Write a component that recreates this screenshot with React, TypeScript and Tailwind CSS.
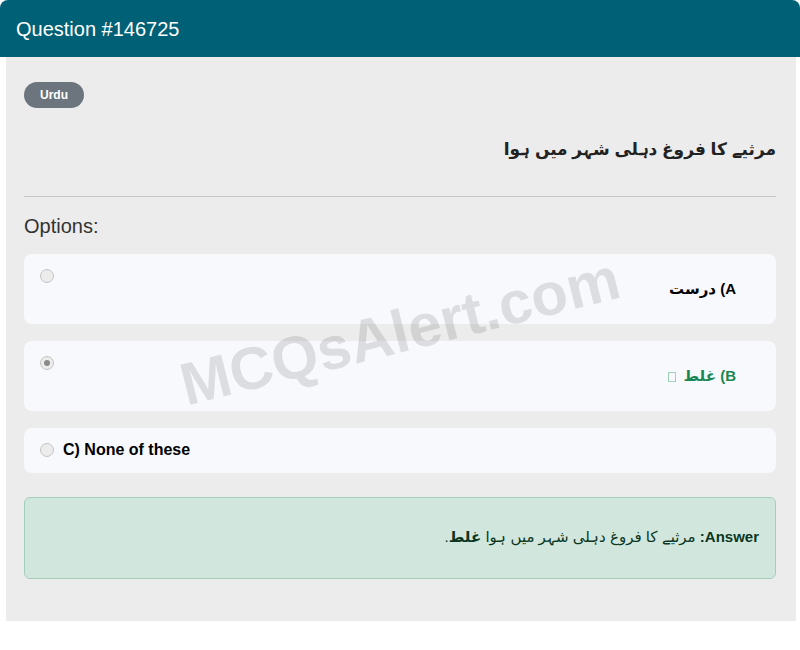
import React from "react";

const font = { fontFamily: '"Liberation Sans", "DejaVu Sans", Arial, sans-serif' };

function Radio({ checked }: { checked?: boolean }) {
  return (
    <span className="inline-flex h-[14px] w-[14px] shrink-0 items-center justify-center rounded-full border border-[#c4c4c4] bg-[#ececec]">
      {checked && <span className="h-[6px] w-[6px] rounded-full bg-[#8a8a8a]" />}
    </span>
  );
}

export default function App() {
  return (
    <div className="relative h-[650px] w-[800px] overflow-hidden bg-white" style={font}>
      <div className="rounded-t-lg bg-[#006075] px-4 h-[57px] flex items-center">
        <h1 className="text-[20px] text-white">Question #146725</h1>
      </div>

      <div className="ml-[6px] mr-[4px] bg-[#ececec] pl-[18px] pr-[20px] pt-[25px] pb-[42px]">
        <span className="inline-flex h-[26px] items-center rounded-full bg-[#6c757d] px-[16px] text-[12px] font-bold text-white">
          Urdu
        </span>

        <p dir="rtl" className="mt-[29px] text-[17px] font-bold text-[#222]">
          مرثیے کا فروغ دہلی شہر میں ہوا
        </p>

        <hr className="mt-[33px] border-t border-[#c6c6c6]" />

        <h2 className="mt-[14px] text-[20px] text-[#333]">Options:</h2>

        <div className="mt-[13px] flex flex-col gap-[17px]">
          <div className="flex h-[70px] rounded-lg bg-[#f8f9fc] pl-4 pr-[40px] pt-[15px]">
            <Radio />
            <div dir="rtl" className="flex-1 pt-[9px] text-[15px] font-bold text-black">
              A) درست
            </div>
          </div>

          <div className="flex h-[70px] rounded-lg bg-[#f8f9fc] pl-4 pr-[40px] pt-[15px]">
            <Radio checked />
            <div dir="rtl" className="flex-1 pt-[9px] text-[15px] font-bold text-[#198754]">
              B) غلط{" "}
              <span className="ml-[2px] mr-[3px] inline-block h-[10px] w-[8px] border border-[#9fd3b6] align-middle" />
            </div>
          </div>

          <div className="flex h-[45px] items-center gap-[9px] rounded-lg bg-[#f8f9fc] px-4">
            <Radio />
            <span className="text-[16px] font-bold text-black">C) None of these</span>
          </div>
        </div>

        <div
          dir="rtl"
          className="mt-[24px] flex h-[82px] items-center rounded-md border border-[#a3cfbb] bg-[#d1e7dd] px-4 text-[15px] text-[#0a3622]"
        >
          <p>
            <b>Answer:</b> مرثیے کا فروغ دہلی شہر میں ہوا <b>غلط</b>.
          </p>
        </div>
      </div>

      <div className="pointer-events-none absolute left-[400px] top-[332px] -translate-x-1/2 -translate-y-1/2 -rotate-[14deg] whitespace-nowrap text-[60px] font-bold text-[rgba(0,0,0,0.11)]">
        MCQsAlert.com
      </div>
    </div>
  );
}
